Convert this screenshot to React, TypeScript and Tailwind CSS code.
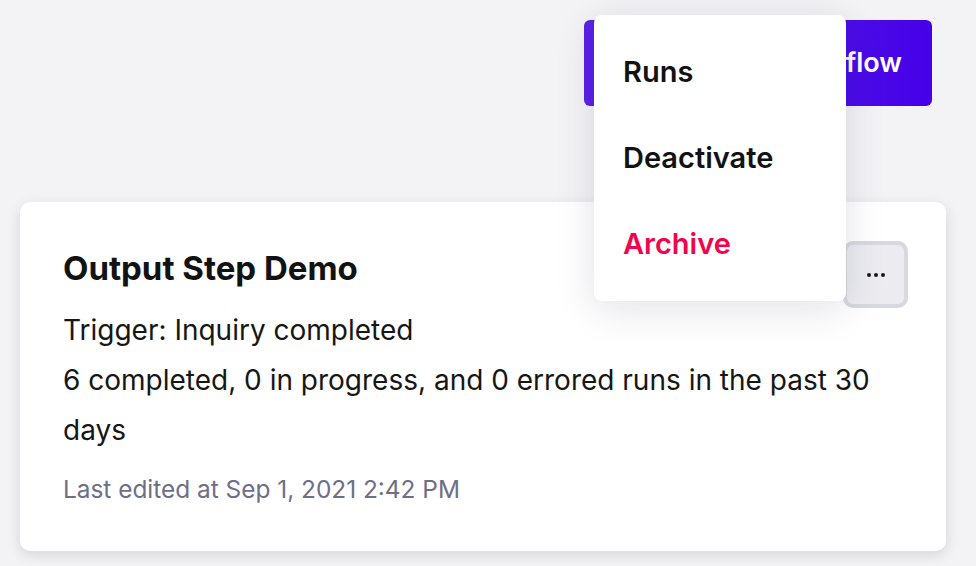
const MENU = [
  { label: "Runs", danger: false },
  { label: "Deactivate", danger: false },
  { label: "Archive", danger: true },
];

const Dots = () => (
  <svg width="20" height="6" viewBox="0 0 20 6" fill="#1a1a1a">
    <circle cx="3" cy="3" r="2" />
    <circle cx="10" cy="3" r="2" />
    <circle cx="17" cy="3" r="2" />
  </svg>
);

export default function App() {
  return (
    <div
      className="min-h-screen w-full bg-[#f3f3f6] pl-5 pr-[30px] pt-5"
      style={{ fontFamily: "Inter, 'Noto Sans', sans-serif" }}
    >
      <div className="flex justify-end pr-[14px]">
        <div className="relative">
          <button className="flex h-[86px] w-[348px] items-center justify-end rounded-md bg-gradient-to-r from-[#5b21e6] to-[#4600e8] pr-[30px] text-[27px] font-semibold text-white">
            Create workflow
          </button>

          <div className="absolute left-[10px] top-[-5px] z-20 flex w-[252px] flex-col rounded-lg bg-white py-[14px] shadow-[0_8px_40px_rgba(20,20,60,0.12)]">
            {MENU.map((item) => (
              <div
                key={item.label}
                className={`flex h-[86px] items-center px-[29px] text-[29px] font-semibold ${
                  item.danger ? "text-[#f4034a]" : "text-[#121212]"
                }`}
              >
                {item.label}
              </div>
            ))}
          </div>
        </div>
      </div>

      <div className="mt-[96px] rounded-[10px] bg-white pb-[45px] pl-[43px] pr-[38px] pt-[46px] shadow-[0_4px_14px_rgba(0,0,0,0.12)]">
        <div className="flex items-start justify-between">
          <h2 className="text-[33px] font-bold leading-[40px] text-[#121212]">
            Output Step Demo
          </h2>
          <button className="mt-[-7px] flex h-[67px] w-[65px] items-center justify-center rounded-[10px] border-4 border-[#d8d8e0] bg-[#ebebf0]">
            <Dots />
          </button>
        </div>
        <div className="-mt-[3px] text-[28px] leading-[50px] text-[#161616]">
          <p>Trigger: Inquiry completed</p>
          <p>6 completed, 0 in progress, and 0 errored runs in the past 30 days</p>
        </div>
        <p className="mt-[17px] text-[24.4px] leading-[34px] text-[#6e6e86]">
          Last edited at Sep 1, 2021 2:42 PM
        </p>
      </div>
    </div>
  );
}
